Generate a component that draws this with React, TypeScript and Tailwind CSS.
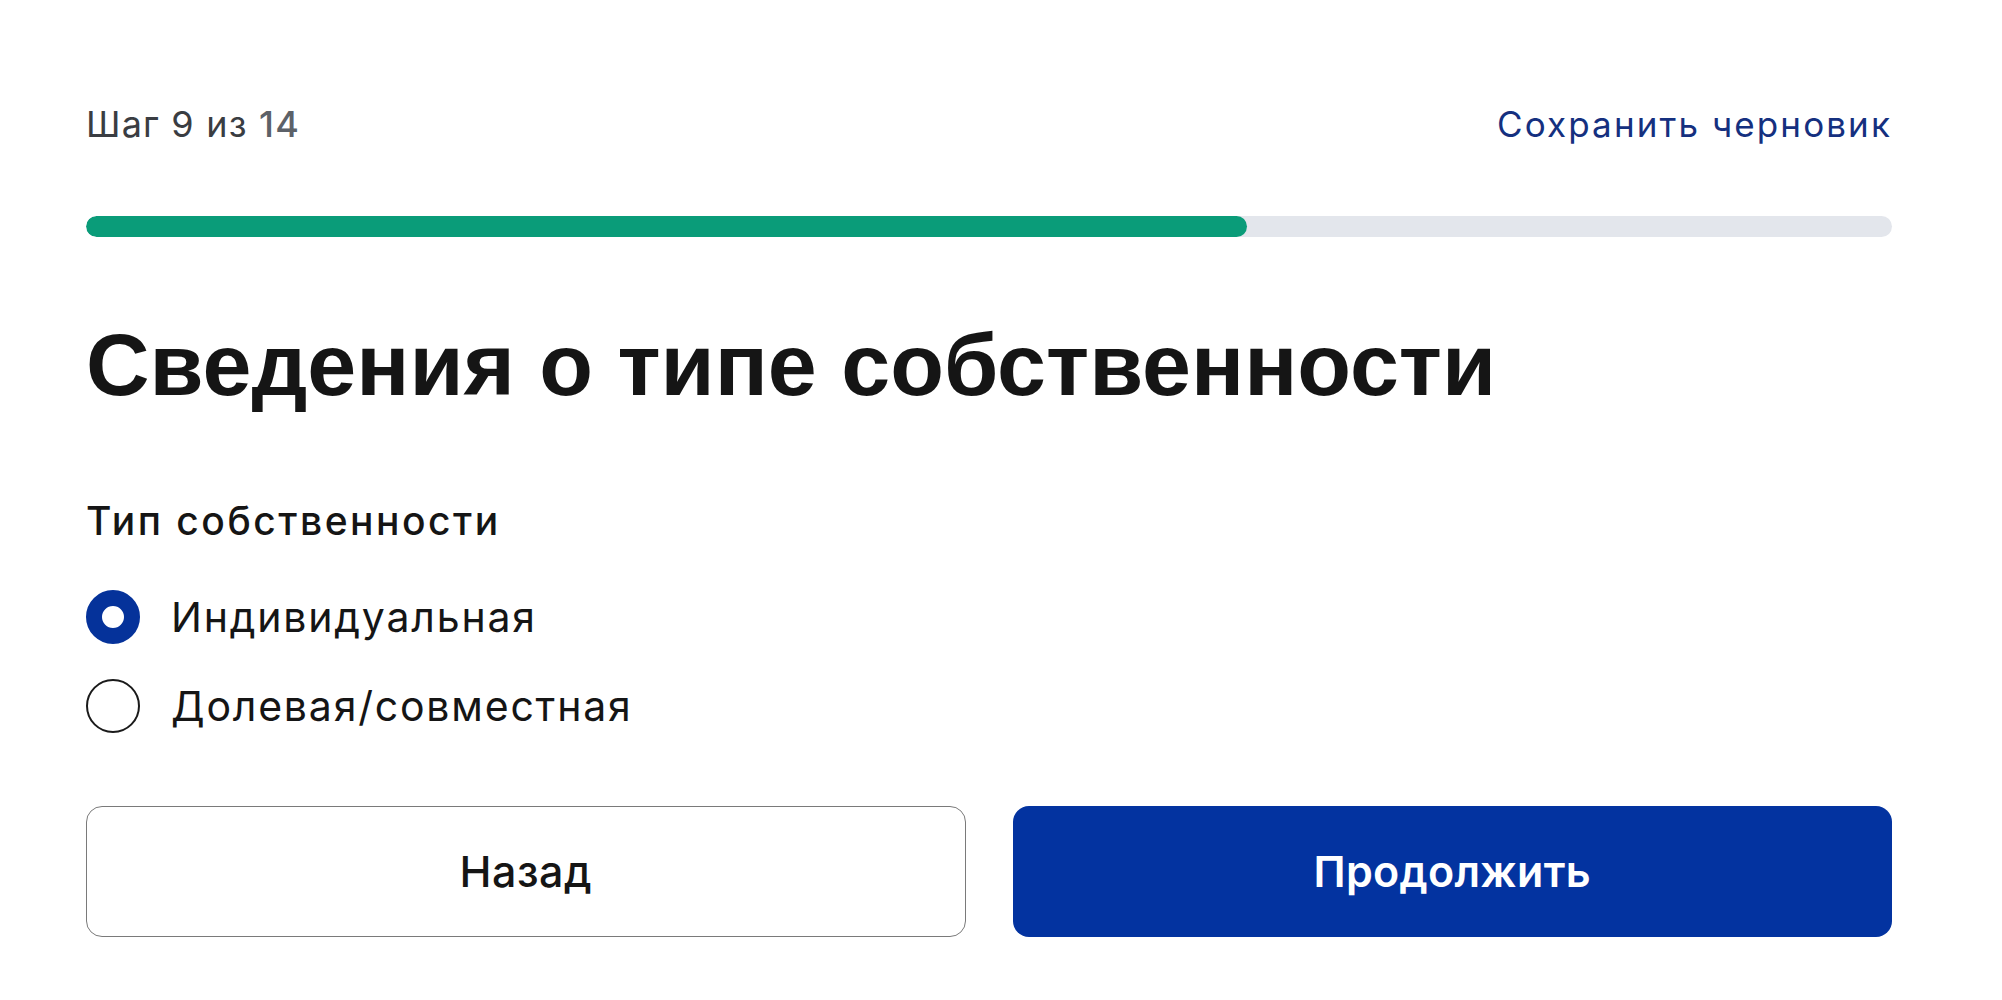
import { useState } from "react";

const OPTIONS = ["Индивидуальная", "Долевая/совместная"];

const STEP = 9;
const TOTAL = 14;

export default function App() {
  const [selected, setSelected] = useState(0);

  return (
    <div className="min-h-screen bg-white font-['Inter',sans-serif]">
      <div className="w-[1806px] pl-[86px] pt-[102px] box-content">
        {/* Step + save draft */}
        <div className="flex items-center justify-between h-[44px]">
          <p className="text-[36px] leading-[44px] tracking-[1.2px] text-[#3a3d42]">
            Шаг {STEP} из <span className="font-medium text-[#5c6168]">{TOTAL}</span>
          </p>
          <button className="text-[35px] leading-[44px] tracking-[2.1px] text-[#15307f]">
            Сохранить черновик
          </button>
        </div>

        {/* Progress */}
        <div className="mt-[70px] h-[21px] rounded-full bg-[#e3e6ec] overflow-hidden">
          <div
            className="h-full rounded-full bg-[#0a9c79]"
            style={{ width: `${(STEP / TOTAL) * 100}%` }}
          />
        </div>

        <h1 className="mt-[78px] font-['Liberation_Sans',Arial,sans-serif] font-bold text-[88px] leading-[100px] text-[#151515]">
          Сведения о типе собственности
        </h1>

        <p className="mt-[84px] text-[39px] leading-[44px] font-medium tracking-[2.5px] text-[#151515]">
          Тип собственности
        </p>

        {/* Radios */}
        <div className="mt-[46px] flex flex-col gap-[34px]">
          {OPTIONS.map((opt, i) => (
            <label key={opt} className="flex items-center gap-[31px] h-[55px] cursor-pointer" onClick={() => setSelected(i)}>
              {selected === i ? (
                <span className="w-[54px] h-[54px] rounded-full border-[16px] border-[#05329a] bg-white shrink-0" />
              ) : (
                <span className="w-[54px] h-[54px] rounded-full border-2 border-[#1a1a1a] bg-white shrink-0" />
              )}
              <span className="text-[41px] leading-[56px] tracking-[1.8px] text-[#151515]">{opt}</span>
            </label>
          ))}
        </div>

        {/* Actions */}
        <div className="mt-[73px] grid grid-cols-2 gap-[47px]">
          <button className="h-[131px] rounded-[16px] border-[1.5px] border-[#7a7a7a] bg-white text-[43px] font-medium tracking-[0.5px] text-[#151515]">
            Назад
          </button>
          <button className="h-[131px] rounded-[16px] bg-[#0333a0] text-[43px] font-semibold tracking-[0.3px] text-white">
            Продолжить
          </button>
        </div>
      </div>
    </div>
  );
}
